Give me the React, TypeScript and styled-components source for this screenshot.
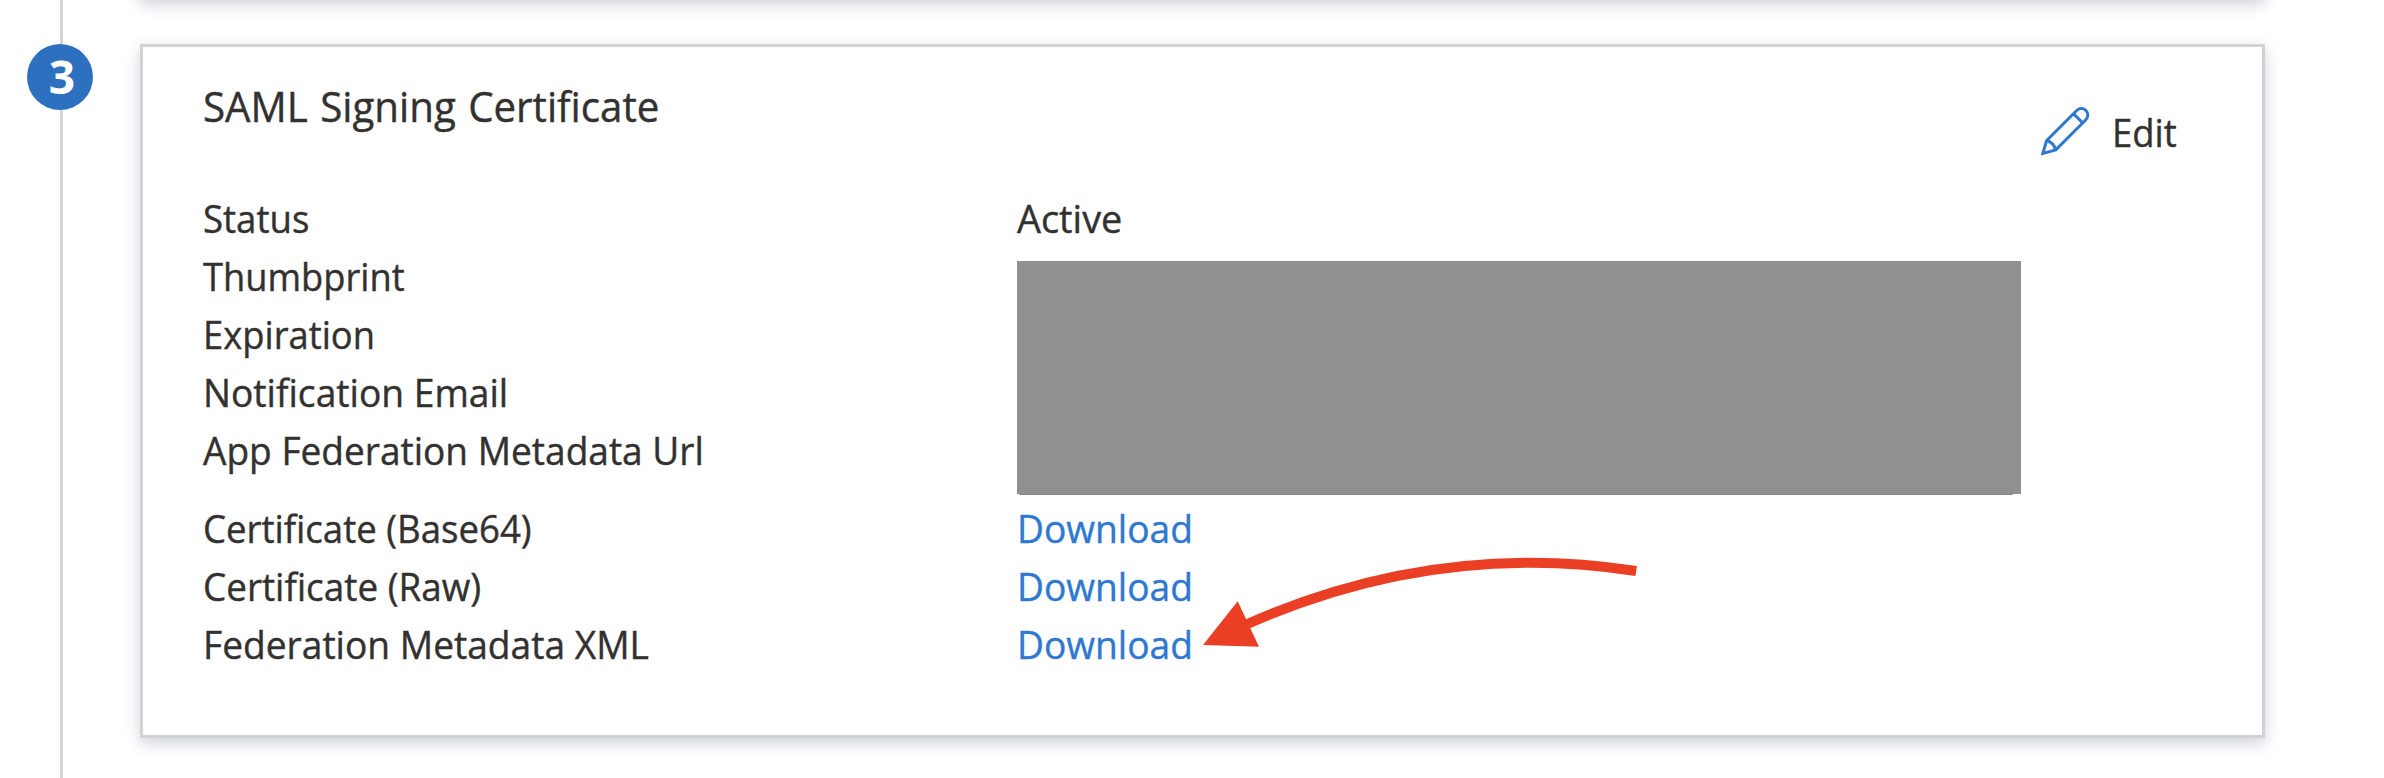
import React from 'react';
import styled, { createGlobalStyle } from 'styled-components';

const GlobalStyle = createGlobalStyle`
  *, *::before, *::after { box-sizing: border-box; }
  body {
    margin: 0;
    background: #fff;
    color: #323130;
    font-family: "Segoe UI", "Open Sans", "Noto Sans", sans-serif;
    overflow: hidden;
  }
`;

const Page = styled.main`
  display: grid;
  grid-template-columns: 120px 2125px;
  column-gap: 20px;
  height: 778px;
  overflow: hidden;
`;

const StepRail = styled.aside`
  display: flex;
  flex-direction: column;
  align-items: center;
`;

const RailLine = styled.div<{ $height?: number }>`
  width: 3px;
  margin-left: 3px;
  background: #d6d6d6;
  ${({ $height }) => ($height ? `height: ${$height}px;` : 'flex: 1;')}
`;

const StepNumber = styled.div`
  width: 66px;
  height: 66px;
  border-radius: 50%;
  background: #2e70c0;
  color: #fff;
  font-size: 46px;
  font-weight: 700;
  line-height: 65px;
  text-align: center;
  padding-left: 4px;
`;

const Steps = styled.div`
  display: flex;
  flex-direction: column;
  gap: 45px;
  margin-top: -61px;
`;

const Card = styled.section`
  border: 3px solid #d2d2d2;
  background: #fff;
  box-shadow: 0 5px 14px rgba(75, 90, 125, 0.28);
`;

const PreviousCard = styled(Card)`
  height: 60px;
  flex: none;
`;

const CertificateCard = styled(Card)`
  display: flex;
  flex-direction: column;
  height: 694px;
  padding: 30px 83px 0 60px;
`;

const CardHeader = styled.header`
  display: flex;
  justify-content: space-between;
  height: 112px;
`;

const Fitted = styled.span<{ $scale: number }>`
  display: inline-block;
  white-space: nowrap;
  transform: scaleX(${({ $scale }) => $scale});
  transform-origin: 0 50%;
  -webkit-text-stroke: 0.4px currentColor;
`;

const Title = styled.h2`
  margin: 0;
  font-size: 42px;
  font-weight: 400;
  line-height: 58px;
  word-spacing: 2px;
`;

const EditButton = styled.button`
  display: flex;
  align-items: flex-start;
  gap: 22px;
  width: 138px;
  height: 58px;
  margin-top: 26px;
  padding: 0;
  border: 0;
  background: none;
  color: inherit;
  font: inherit;
  font-size: 39px;
  line-height: 58px;
`;

const PencilIcon = styled.svg`
  flex: none;
  width: 49px;
  height: 49px;
  margin-top: 4px;
  fill: none;
  stroke: #2f78d2;
  stroke-width: 3;
`;

const Details = styled.div`
  display: grid;
  grid-template-columns: 814px 1004px;
  grid-template-rows: repeat(5, 58px) 20px repeat(3, 58px);
  font-size: 39px;
  line-height: 58px;
`;

const Label = styled.div<{ $row: number }>`
  grid-column: 1;
  grid-row: ${({ $row }) => $row};
`;

const Value = styled.div<{ $row: number }>`
  grid-column: 2;
  grid-row: ${({ $row }) => $row};
`;

const Redacted = styled.div`
  grid-column: 2;
  grid-row: 2 / 7;
  height: 234px;
  margin-top: 14px;
  background: #909090;
  border-bottom: 1px solid #858585;
  clip-path: polygon(0 0, 100% 0, 100% 233px, 996px 233px, 995px 100%, 3px 100%, 2px 233px, 0 233px);
`;

const DownloadLink = styled.a`
  color: #2f78d2;
  text-decoration: none;
`;

const LastValue = styled(Value)`
  position: relative;
`;

const Arrow = styled.svg`
  position: absolute;
  left: 183px;
  top: -64px;
  width: 440px;
  height: 110px;
`;

type Field = { row: number; label: string; scale: number };

const fields: Field[] = [
  { row: 1, label: 'Status', scale: 0.938 },
  { row: 2, label: 'Thumbprint', scale: 0.93 },
  { row: 3, label: 'Expiration', scale: 0.932 },
  { row: 4, label: 'Notification Email', scale: 0.953 },
  { row: 5, label: 'App Federation Metadata Url', scale: 0.95 },
  { row: 7, label: 'Certificate (Base64)', scale: 0.938 },
  { row: 8, label: 'Certificate (Raw)', scale: 0.945 },
  { row: 9, label: 'Federation Metadata XML', scale: 0.952 },
];

const Download = () => (
  <DownloadLink>
    <Fitted $scale={0.952}>Download</Fitted>
  </DownloadLink>
);

export default function App() {
  return (
    <>
      <GlobalStyle />
      <Page>
        <StepRail>
          <RailLine $height={44} />
          <StepNumber>3</StepNumber>
          <RailLine />
        </StepRail>
        <Steps>
          <PreviousCard />
          <CertificateCard>
            <CardHeader>
              <Title>
                <Fitted $scale={0.959}>SAML Signing Certificate</Fitted>
              </Title>
              <EditButton>
                <PencilIcon viewBox="0 0 49 49">
                  <path d="M1.8 46.4 5.7 33.5 35.7 3.5a6.5 6.5 0 0 1 9.2 9.2L14.8 42.9Z" />
                  <path d="M5.7 33.5Q12.6 35.6 14.8 42.9M32.5 6.7l9.2 9.2" />
                </PencilIcon>
                <Fitted $scale={0.935}>Edit</Fitted>
              </EditButton>
            </CardHeader>
            <Details>
              {fields.map(({ row, label, scale }) => (
                <Label key={label} $row={row}>
                  <Fitted $scale={scale}>{label}</Fitted>
                </Label>
              ))}
              <Value $row={1}>
                <Fitted $scale={0.971}>Active</Fitted>
              </Value>
              <Redacted />
              <Value $row={7}>
                <Download />
              </Value>
              <Value $row={8}>
                <Download />
              </Value>
              <LastValue $row={9}>
                <Download />
                <Arrow viewBox="1200 551 440 110">
                  <path d="M1636.2 571Q1435 540 1244 625.5" fill="none" stroke="#eb3f25" strokeWidth="10" />
                  <path d="M1203 645 1237.7 601.2 1259 646.8Z" fill="#eb3f25" />
                </Arrow>
              </LastValue>
            </Details>
          </CertificateCard>
        </Steps>
      </Page>
    </>
  );
}
